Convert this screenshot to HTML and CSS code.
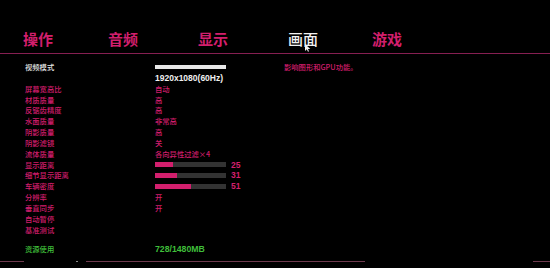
FILE: index.html
```html
<!DOCTYPE html>
<html lang="zh-CN">
<head>
<meta charset="utf-8">
<title>画面设置</title>
<link rel="stylesheet" href="styles.css">
</head>
<body>
<header class="tabs">
  <span class="tab">操作</span>
  <span class="tab">音频</span>
  <span class="tab">显示</span>
  <span class="tab tab-active">画面<svg class="cursor" width="6" height="8" viewBox="0 0 6 8"><path d="M0 0 L0 7 L1.8 5.3 L3 7.8 L4 7.3 L2.9 4.9 L5.3 4.9 Z" fill="#f2f2f2"/></svg></span>
  <span class="tab">游戏</span>
</header>

<main class="content">
  <section class="panel">
    <div class="settings">
      <span class="label label-white">视频模式</span>
      <span class="bar bar-white"></span>
      <span></span>

      <span></span>
      <span class="value value-white">1920x1080(60Hz)</span>

      <span class="label">屏幕宽高比</span><span class="value">自动</span>
      <span class="label">材质质量</span><span class="value">高</span>
      <span class="label">反锯齿精度</span><span class="value">高</span>
      <span class="label">水面质量</span><span class="value">非常高</span>
      <span class="label">阴影质量</span><span class="value">高</span>
      <span class="label">阴影滤镜</span><span class="value">关</span>
      <span class="label">流体质量</span><span class="value">各向异性过滤×4</span>

      <span class="label">显示距离</span>
      <span class="bar"><span class="fill" style="width:25%"></span></span>
      <span class="num">25</span>

      <span class="label">细节显示距离</span>
      <span class="bar"><span class="fill" style="width:31%"></span></span>
      <span class="num">31</span>

      <span class="label">车辆密度</span>
      <span class="bar"><span class="fill" style="width:51%"></span></span>
      <span class="num">51</span>

      <span class="label">分辨率</span><span class="value">开</span>
      <span class="label">垂直同步</span><span class="value">开</span>
      <span class="label">自动暂停</span><span class="value"></span>
      <span class="label">基准测试</span><span class="value"></span>
    </div>
    <div class="settings usage">
      <span class="label label-green">资源使用</span>
      <span class="value value-green">728/1480MB</span>
    </div>
  </section>
  <p class="desc">影响图形和GPU功能。</p>
</main>

<footer class="footer">
  <span class="seg seg-a"></span>
  <span class="seg seg-dot"></span>
  <span class="seg seg-b"></span>
  <span class="seg seg-c"></span>
</footer>
</body>
</html>
```

FILE: styles.css
```css
* { box-sizing: border-box; }
html, body {
  margin: 0;
  padding: 0;
  background: #000;
  width: 550px;
  height: 268px;
  overflow: hidden;
  font-family: "Noto Sans CJK SC", "Liberation Sans", sans-serif;
}

.tabs {
  display: grid;
  grid-template-columns: 85px 90px 90px 84px auto;
  padding: 31px 0 6px 23px;
  border-bottom: 1px solid #861f52;
}
.tab {
  position: relative;
  font-size: 15px;
  line-height: 16px;
  font-weight: 700;
  color: #d21f6d;
}
.tab-active {
  color: #f2f2f2;
  font-weight: 500;
}
.cursor {
  position: absolute;
  left: 17px;
  top: 13px;
}

.content {
  display: flex;
  padding-top: 7.6px;
}
.panel {
  flex: none;
  width: 284px;
  padding-left: 25px;
}
.settings {
  display: grid;
  grid-template-columns: 130px 71px auto;
  grid-auto-rows: 10.85px;
  align-items: center;
}
.label {
  font-size: 7.3px;
  line-height: 10px;
  font-weight: 500;
  color: #d01d6b;
  white-space: nowrap;
}
.label-white { color: #e6e6e6; }
.label-green { color: #3fbf3a; }
.value {
  grid-column: 2 / 4;
  font-size: 7.3px;
  line-height: 10px;
  font-weight: 500;
  color: #d01d6b;
  white-space: nowrap;
}
.value-white {
  font-family: "Liberation Sans", sans-serif;
  font-weight: 700;
  font-size: 8.5px;
  color: #f0f0f0;
}
.value-green {
  font-family: "Liberation Sans", sans-serif;
  font-weight: 700;
  font-size: 8.7px;
  color: #3fbf3a;
}
.bar {
  display: block;
  height: 5px;
  background: #333;
}
.bar-white {
  height: 4px;
  background: #e8e8e8;
}
.fill {
  display: block;
  height: 100%;
  background: #d21f6d;
}
.num {
  padding-left: 5px;
  font-family: "Liberation Sans", sans-serif;
  font-weight: 700;
  font-size: 8.5px;
  color: #d21f6d;
}
.usage {
  margin-top: 8.4px;
}

.desc {
  margin: 0;
  font-size: 7.3px;
  line-height: 10.85px;
  font-weight: 500;
  color: #d01d6b;
  white-space: nowrap;
}

.footer {
  display: flex;
  margin-top: 6.4px;
  height: 1px;
}
.seg {
  display: block;
  height: 1px;
  background: #6e3a4e;
}
.seg-a { width: 24px; }
.seg-dot { width: 2px; margin-left: 52px; background: #8a8a8a; }
.seg-b { width: 279px; margin-left: 8px; }
.seg-c { width: 17px; margin-left: 168px; }
```
